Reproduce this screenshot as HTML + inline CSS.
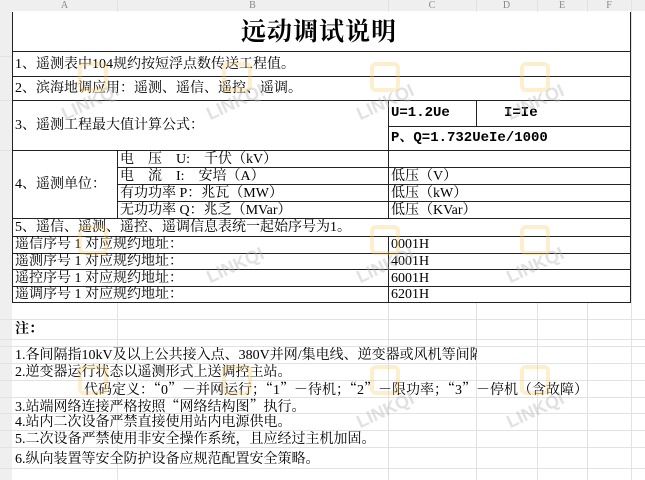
<!DOCTYPE html><html><head><meta charset="utf-8"><style>
body{margin:0;width:645px;height:480px;overflow:hidden;background:#fff;position:relative;font-family:"Liberation Serif","Noto Serif CJK SC",serif;font-size:14px;color:#000}
.a{position:absolute}
.h{position:absolute;height:0;border-top:1px solid #e2e2e2}
.v{position:absolute;width:0;border-left:1px solid #e2e2e2}
.H{position:absolute;height:0;border-top:1.5px solid #222}
.V{position:absolute;width:0;border-left:1.5px solid #222}
.t{position:absolute;white-space:nowrap;line-height:17px}
.c{font-family:"Noto Serif CJK SC",serif}
.m{font-family:"Liberation Mono","Noto Serif CJK SC",monospace;font-weight:bold;font-size:14px}
.col{position:absolute;top:0;height:11px;font-size:10px;color:#888;text-align:center;line-height:11px;font-family:"Liberation Serif",serif}
.wm{position:absolute;color:rgba(180,180,180,.4);font:bold 18px "Liberation Sans",sans-serif;transform:rotate(-25deg)}
.lg{position:absolute;width:22px;height:22px;border:4px solid rgba(250,200,90,.3);border-radius:6px}
</style></head><body>
<div class="a" style="left:0;top:0;width:645px;height:11px;background:#efefef"></div>
<div class="a" style="left:0;top:0;width:12px;height:480px;background:#efefef"></div>
<div class="col" style="left:12px;width:105px">A</div>
<div class="col" style="left:117px;width:271px">B</div>
<div class="col" style="left:388px;width:88px">C</div>
<div class="col" style="left:476px;width:61px">D</div>
<div class="col" style="left:537px;width:50px">E</div>
<div class="col" style="left:587px;width:44px">F</div>
<div class="v" style="left:117px;top:0;height:12px"></div><div class="v" style="left:388px;top:0;height:12px"></div><div class="v" style="left:476px;top:0;height:12px"></div><div class="v" style="left:537px;top:0;height:12px"></div><div class="v" style="left:587px;top:0;height:12px"></div><div class="v" style="left:631px;top:0;height:480px"></div>
<div class="v" style="left:117px;top:302px;height:178px"></div><div class="v" style="left:388px;top:302px;height:178px"></div><div class="v" style="left:476px;top:302px;height:178px"></div><div class="v" style="left:537px;top:302px;height:178px"></div><div class="v" style="left:587px;top:302px;height:178px"></div>
<div class="h" style="left:0;top:319px;width:645px"></div>
<div class="h" style="left:0;top:339px;width:645px"></div>
<div class="h" style="left:0;top:346px;width:645px"></div>
<div class="h" style="left:0;top:363px;width:645px"></div>
<div class="h" style="left:0;top:380px;width:645px"></div>
<div class="h" style="left:0;top:397px;width:645px"></div>
<div class="h" style="left:0;top:413px;width:645px"></div>
<div class="h" style="left:0;top:430px;width:645px"></div>
<div class="h" style="left:0;top:447px;width:645px"></div>
<div class="h" style="left:0;top:468px;width:645px"></div>
<div class="h" style="left:0;top:56px;width:12px"></div><div class="h" style="left:0;top:100px;width:12px"></div><div class="h" style="left:0;top:150px;width:12px"></div>
<div class="V" style="left:12px;top:12px;height:290px"></div>
<div class="V" style="left:630px;top:12px;height:290px"></div>
<div class="H" style="left:12px;top:51px;width:619px"></div>
<div class="H" style="left:12px;top:76px;width:619px"></div>
<div class="H" style="left:12px;top:100px;width:619px"></div>
<div class="H" style="left:388px;top:126px;width:243px"></div>
<div class="H" style="left:12px;top:150px;width:619px"></div>
<div class="H" style="left:117px;top:167px;width:514px"></div>
<div class="H" style="left:117px;top:184px;width:514px"></div>
<div class="H" style="left:117px;top:201px;width:514px"></div>
<div class="H" style="left:12px;top:218px;width:619px"></div>
<div class="H" style="left:12px;top:236px;width:619px"></div>
<div class="H" style="left:12px;top:253px;width:619px"></div>
<div class="H" style="left:12px;top:269px;width:619px"></div>
<div class="H" style="left:12px;top:286px;width:619px"></div>
<div class="H" style="left:12px;top:302px;width:619px"></div>
<div class="V" style="left:388px;top:100px;height:118px"></div>
<div class="V" style="left:476px;top:100px;height:26px"></div>
<div class="V" style="left:117px;top:150px;height:68px"></div>
<div class="V" style="left:388px;top:236px;height:66px"></div>
<div class="t" style="left:241px;top:18px;font-size:25px;line-height:30px;letter-spacing:1px;font-weight:bold">远动调试说明</div>
<div class="t" style="left:15px;top:56px">1、遥测表中104规约按短浮点数传送工程值。</div>
<div class="t" style="left:15px;top:80px">2、滨海地调应用：遥测、遥信、遥控、遥调。</div>
<div class="t" style="left:15px;top:117px">3、遥测工程最大值计算公式：</div>
<div class="t m" style="left:391px;top:105px">U=1.2Ue</div>
<div class="t m" style="left:504px;top:105px">I=Ie</div>
<div class="t m" style="left:391px;top:130px">P、Q=1.732UeIe/1000</div>
<div class="t" style="left:15px;top:176px">4、遥测单位：</div>
<div class="t" style="left:120px;top:151px">电　压　U:　千伏（kV）</div>
<div class="t" style="left:120px;top:168px">电　流　I:　安培（A）</div>
<div class="t" style="left:120px;top:185px">有功功率 P：兆瓦（MW）</div>
<div class="t" style="left:120px;top:202px">无功功率 Q：兆乏（MVar）</div>
<div class="t" style="left:391px;top:168px">低压（V）</div>
<div class="t" style="left:391px;top:185px">低压（kW）</div>
<div class="t" style="left:391px;top:202px">低压（KVar）</div>
<div class="t" style="left:15px;top:219px">5、遥信、遥测、遥控、遥调信息表统一起始序号为1。</div>
<div class="t" style="left:15px;top:236px">遥信序号 1 对应规约地址：</div>
<div class="t" style="left:15px;top:253px">遥测序号 1 对应规约地址：</div>
<div class="t" style="left:15px;top:270px">遥控序号 1 对应规约地址：</div>
<div class="t" style="left:15px;top:286px">遥调序号 1 对应规约地址：</div>
<div class="t" style="left:391px;top:236px">0001H</div>
<div class="t" style="left:391px;top:253px">4001H</div>
<div class="t" style="left:391px;top:270px">6001H</div>
<div class="t" style="left:391px;top:286px">6201H</div>
<div class="t" style="left:15px;top:321px;font-weight:bold">注：</div>
<div class="t" style="left:15px;top:347px;width:462px;overflow:hidden">1.各间隔指10kV及以上公共接入点、380V并网/集电线、逆变器或风机等间隔</div>
<div class="t" style="left:15px;top:364px">2.逆变器运行状态以遥测形式上送调控主站。</div>
<div class="t" style="left:84px;top:381px">代码定义：<span class="c">“</span>0<span class="c">”</span>－并网运行；<span class="c">“</span>1<span class="c">”</span>－待机；<span class="c">“</span>2<span class="c">”</span>－限功率；<span class="c">“</span>3<span class="c">”</span>－停机（含故障）</div>
<div class="t" style="left:15px;top:398px">3.站端网络连接严格按照<span class="c">“</span>网络结构图<span class="c">”</span>执行。</div>
<div class="t" style="left:15px;top:414px">4.站内二次设备严禁直接使用站内电源供电。</div>
<div class="t" style="left:15px;top:431px">5.二次设备严禁使用非安全操作系统，且应经过主机加固。</div>
<div class="t" style="left:15px;top:451px">6.纵向装置等安全防护设备应规范配置安全策略。</div>
<div class="lg" style="left:78px;top:62px"></div><div class="wm" style="left:60px;top:92px">LINKQI</div>
<div class="lg" style="left:222px;top:62px"></div><div class="wm" style="left:205px;top:92px">LINKQI</div>
<div class="lg" style="left:370px;top:62px"></div><div class="wm" style="left:355px;top:92px">LINKQI</div>
<div class="lg" style="left:520px;top:62px"></div><div class="wm" style="left:505px;top:92px">LINKQI</div>
<div class="lg" style="left:78px;top:225px"></div><div class="wm" style="left:205px;top:255px">LINKQI</div>
<div class="lg" style="left:370px;top:225px"></div><div class="wm" style="left:355px;top:255px">LINKQI</div>
<div class="lg" style="left:520px;top:225px"></div><div class="wm" style="left:505px;top:255px">LINKQI</div>
<div class="lg" style="left:78px;top:365px"></div><div class="lg" style="left:222px;top:365px"></div>
<div class="lg" style="left:370px;top:365px"></div><div class="wm" style="left:355px;top:400px">LINKQI</div>
<div class="lg" style="left:520px;top:365px"></div><div class="wm" style="left:505px;top:400px">LINKQI</div>
</body></html>
